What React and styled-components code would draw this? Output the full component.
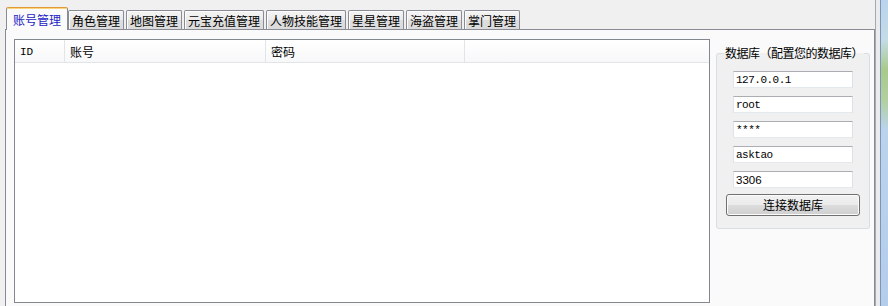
import React from 'react';
import styled, { createGlobalStyle } from 'styled-components';

const GlobalStyle = createGlobalStyle`
    html, body {
        margin: 0;
        padding: 0;
    }
    body {
        background: #f0f0f0;
        font-family: "Noto Sans CJK SC", "Liberation Sans", sans-serif;
        font-size: 12px;
        color: #000;
    }
`;

const Window = styled.div`
    display: flex;
    width: 888px;
    height: 306px;
    overflow: hidden;
`;

const Client = styled.div`
    box-sizing: border-box;
    width: 876px;
    display: flex;
    flex-direction: column;
    padding-left: 5px;
    border-right: 1px solid #a5a9ae;
    background: #f0f0f0;
`;

const DesktopEdge = styled.div`
    flex: 1;
    background:
        linear-gradient(to right, #e9ebee 0 4px, #7b95b8 4px 5px, transparent 5px),
        linear-gradient(to bottom, #bcd3ec 0, #c5dbe6 40px, #a9c98a 70px, #b3cfa0 100px, #bcd3ec 130px, #b4cde9 100%);
`;

const TabStrip = styled.div`
    display: flex;
    align-items: flex-end;
    height: 29px;
    padding-left: 1px;
`;

const Tab = styled.div`
    box-sizing: border-box;
    position: relative;
    z-index: ${p => (p.$active ? 1 : 0)};
    height: ${p => (p.$active ? '23px' : '19px')};
    margin-bottom: ${p => (p.$active ? '-1px' : '0')};
    margin-right: ${p => (p.$active ? '0' : '2px')};
    padding: ${p => (p.$active ? '4px 6px 0' : '2px 3px 0')};
    border: 1px solid #898c95;
    border-bottom: none;
    border-top-color: ${p => (p.$active ? '#e39c35' : '#898c95')};
    border-radius: 2px 2px 0 0;
    background: ${p =>
        p.$active
            ? '#fbfbfb'
            : 'linear-gradient(to bottom, #f4f4f4 0%, #ebebeb 50%, #dedede 51%, #dbdbdb 100%)'};
    box-shadow: ${p => (p.$active ? 'inset 0 1px #fbd37a' : 'inset 1px 1px #fcfcfc')};
    color: ${p => (p.$active ? '#1c24c4' : '#000')};
    line-height: 15px;
    white-space: nowrap;
`;

const Panel = styled.div`
    flex: 1;
    display: flex;
    align-items: flex-start;
    gap: 6px;
    padding: 9px 4px 0 8px;
    border: 1px solid #898c95;
    border-bottom: none;
    background: #fafafa;
`;

const ListView = styled.div`
    box-sizing: border-box;
    flex-shrink: 0;
    width: 696px;
    height: 264px;
    border: 1px solid #828790;
    background: #fff;
`;

const ListHeader = styled.div`
    display: flex;
    height: 23px;
    box-sizing: border-box;
    border-bottom: 1px solid #e2e4e7;
    background: linear-gradient(to bottom, #ffffff, #f7f8f9);
`;

const HeaderCell = styled.div`
    box-sizing: border-box;
    width: ${p => p.$width}px;
    flex: ${p => (p.$width ? 'none' : '1')};
    padding: 2px 0 0 5px;
    border-right: ${p => (p.$width ? '1px solid #e2e4e7' : 'none')};
    font-family: ${p => (p.$mono ? '"Liberation Mono", monospace' : '"Noto Sans CJK SC", sans-serif')};
    font-size: ${p => (p.$mono ? '11px' : '12px')};
    line-height: 20px;
`;

const GroupBox = styled.fieldset`
    box-sizing: border-box;
    width: 154px;
    min-inline-size: 0;
    margin: 7px 0 0;
    padding: 0 0 12px;
    border: 1px solid #d5dfe5;
    border-radius: 3px;
    background: #f0f0f0;
`;

const GroupTitle = styled.legend`
    margin-left: 7px;
    padding: 0 1px;
    font-size: 12px;
    line-height: 14px;
    letter-spacing: -0.5px;
`;

const Fields = styled.div`
    display: flex;
    flex-direction: column;
    align-items: flex-start;
    gap: 8px;
    padding: 11px 0 0 9px;
`;

const TextBox = styled.input`
    box-sizing: border-box;
    width: 120px;
    height: 17px;
    margin: 0 0 0 7px;
    padding: 0 2px;
    border: 1px solid;
    border-color: #abadb3 #dbdfe6 #e3e9ef #e2e3ea;
    background: #fff;
    color: #000;
    font-family: ${p => (p.$mono ? '"Liberation Mono", monospace' : '"Liberation Sans", sans-serif')};
    font-size: ${p => (p.$mono ? '11px' : '11.5px')};
    letter-spacing: ${p => (p.$mono ? '-0.5px' : '0')};
    outline: none;
`;

const Button = styled.button`
    box-sizing: border-box;
    width: 134px;
    height: 22px;
    margin-top: -2px;
    padding: 0;
    border: 1px solid #707070;
    border-radius: 3px;
    background: linear-gradient(to bottom, #f2f2f2 0%, #ebebeb 50%, #dddddd 51%, #cfcfcf 100%);
    box-shadow: inset 0 0 0 1px #fcfcfc;
    font-family: "Noto Sans CJK SC", sans-serif;
    font-size: 12px;
    color: #000;
    line-height: 18px;
`;

const tabs = ['账号管理', '角色管理', '地图管理', '元宝充值管理', '人物技能管理', '星星管理', '海盗管理', '掌门管理'];

const columns = [
    { title: 'ID', width: 50, mono: true },
    { title: '账号', width: 201 },
    { title: '密码', width: 199 },
    { title: '' },
];

const fields = [
    { value: '127.0.0.1', mono: true },
    { value: 'root', mono: true },
    { value: '****', mono: true },
    { value: 'asktao', mono: true },
    { value: '3306', mono: false },
];

const App = () => {
    return (
        <>
            <GlobalStyle />
            <Window>
                <Client>
                    <TabStrip>
                        {tabs.map((t, i) => (
                            <Tab key={t} $active={i === 0}>
                                {t}
                            </Tab>
                        ))}
                    </TabStrip>
                    <Panel>
                        <ListView>
                            <ListHeader>
                                {columns.map((c, i) => (
                                    <HeaderCell key={i} $width={c.width} $mono={c.mono}>
                                        {c.title}
                                    </HeaderCell>
                                ))}
                            </ListHeader>
                        </ListView>
                        <GroupBox>
                            <GroupTitle>数据库（配置您的数据库）</GroupTitle>
                            <Fields>
                                {fields.map((f, i) => (
                                    <TextBox key={i} readOnly defaultValue={f.value} $mono={f.mono} />
                                ))}
                                <Button>连接数据库</Button>
                            </Fields>
                        </GroupBox>
                    </Panel>
                </Client>
                <DesktopEdge />
            </Window>
        </>
    );
};

export default App;
